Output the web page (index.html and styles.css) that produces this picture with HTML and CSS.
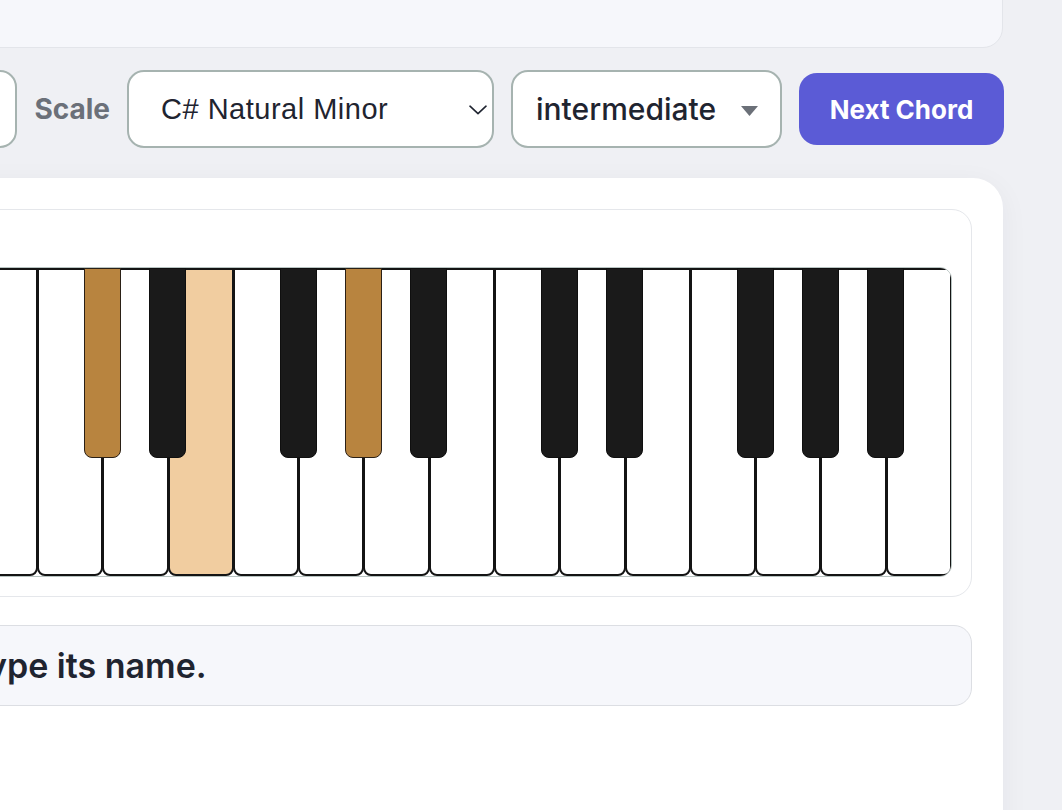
FILE: index.html
```html
<!DOCTYPE html>
<html lang="en">
<head>
<meta charset="utf-8">
<title>Chord Trainer</title>
<link rel="stylesheet" href="styles.css">
</head>
<body>
<div class="page">
  <div class="top-card"></div>

  <div class="controls">
    <span class="label">Key</span>
    <div class="select select-key">
      <span class="select-text">C#</span>
    </div>
    <span class="label">Scale</span>
    <div class="select select-scale">
      <span class="select-text">C# Natural Minor</span>
      <svg class="chevron" width="18" height="10" viewBox="0 0 18 10"><path d="M1 1.2 L9 8.6 L17 1.2" fill="none" stroke="#1f2430" stroke-width="1.6" stroke-linecap="round" stroke-linejoin="round"/></svg>
    </div>
    <div class="select select-level">
      <span class="level-text">intermediate</span>
      <svg class="caret" width="17" height="10" viewBox="0 0 17 10"><path d="M0 0 H17 L8.5 10 Z" fill="#6b7078"/></svg>
    </div>
    <button class="next-btn">Next Chord</button>
  </div>

  <div class="main-card">
    <div class="piano-card">
      <div class="keyboard">
        <div class="wkey"></div><div class="wkey"></div><div class="wkey"></div><div class="wkey"></div><div class="wkey"></div><div class="wkey"></div><div class="wkey"></div>
        <div class="wkey"></div><div class="wkey"></div><div class="wkey lit"></div><div class="wkey"></div><div class="wkey"></div><div class="wkey"></div><div class="wkey"></div>
        <div class="wkey"></div><div class="wkey"></div><div class="wkey"></div><div class="wkey"></div><div class="wkey"></div><div class="wkey"></div><div class="wkey"></div>

        <div class="bkey" style="left: calc(1 / 21 * 100% - 18.5px)"></div>
        <div class="bkey" style="left: calc(2 / 21 * 100% - 18.5px)"></div>
        <div class="bkey" style="left: calc(4 / 21 * 100% - 18.5px)"></div>
        <div class="bkey" style="left: calc(5 / 21 * 100% - 18.5px)"></div>
        <div class="bkey" style="left: calc(6 / 21 * 100% - 18.5px)"></div>
        <div class="bkey lit" style="left: calc(8 / 21 * 100% - 18.5px)"></div>
        <div class="bkey" style="left: calc(9 / 21 * 100% - 18.5px)"></div>
        <div class="bkey" style="left: calc(11 / 21 * 100% - 18.5px)"></div>
        <div class="bkey lit" style="left: calc(12 / 21 * 100% - 18.5px)"></div>
        <div class="bkey" style="left: calc(13 / 21 * 100% - 18.5px)"></div>
        <div class="bkey" style="left: calc(15 / 21 * 100% - 18.5px)"></div>
        <div class="bkey" style="left: calc(16 / 21 * 100% - 18.5px)"></div>
        <div class="bkey" style="left: calc(18 / 21 * 100% - 18.5px)"></div>
        <div class="bkey" style="left: calc(19 / 21 * 100% - 18.5px)"></div>
        <div class="bkey" style="left: calc(20 / 21 * 100% - 18.5px)"></div>
      </div>
    </div>

    <div class="prompt">Identify this chord and type its name.</div>

    <div class="answer-space"></div>
  </div>
</div>
</body>
</html>
```

FILE: styles.css
```css
* {
  box-sizing: border-box;
}

html, body {
  margin: 0;
  padding: 0;
  background: #eff0f4;
  overflow: hidden;
}

body {
  font-family: "Inter", "Liberation Sans", sans-serif;
  color: #1f2430;
}

.page {
  width: 1475px;
  margin-left: -472px;
}

.top-card {
  height: 68px;
  margin-top: -20px;
  background: #f6f7fb;
  border: 1px solid #e3e5ea;
  border-radius: 20px;
}

.controls {
  display: flex;
  justify-content: flex-end;
  align-items: center;
  gap: 17px;
  margin-top: 22px;
  margin-right: -1px;
}

.label {
  font-family: "Inter", sans-serif;
  font-weight: 700;
  font-size: 28px;
  color: #6b7079;
}

.select {
  display: flex;
  align-items: center;
  height: 78px;
  background: #ffffff;
  border: 2px solid #a6b3b0;
  border-radius: 17px;
}

.select-key {
  width: 150px;
  padding-left: 24px;
}

.select-text {
  font-family: "Liberation Sans", Arial, sans-serif;
  font-size: 29px;
  letter-spacing: 0.5px;
  color: #1f2430;
}

.select-scale {
  width: 367px;
  padding-left: 32px;
  padding-right: 5px;
  justify-content: space-between;
}

.chevron {
  margin-top: 1px;
}

.select-level {
  width: 271px;
  padding-left: 23px;
  padding-right: 22px;
  justify-content: space-between;
}

.level-text {
  font-family: "Inter", sans-serif;
  font-weight: 500;
  font-size: 30px;
  color: #1f2430;
}

.caret {
  margin-top: 3px;
}

.next-btn {
  width: 205px;
  height: 72px;
  border: none;
  border-radius: 18px;
  background: #5b5bd6;
  color: #ffffff;
  font-family: "Inter", sans-serif;
  font-weight: 700;
  font-size: 26px;
  padding: 0;
}

.main-card {
  margin-top: 30px;
  background: #ffffff;
  border-radius: 30px;
  padding: 31px 31px 200px;
  box-shadow: 0 6px 28px rgba(20, 28, 50, 0.05);
}

.piano-card {
  border: 1px solid #e5e7eb;
  border-radius: 20px;
  padding: 57px 19px 19px;
}

.keyboard {
  position: relative;
  display: flex;
  height: 310px;
  border: 1px solid #b8c4c2;
  border-radius: 12px;
  overflow: hidden;
  background: #ffffff;
}

.wkey {
  flex: 1 1 0;
  height: 100%;
  margin-right: -1px;
  background: #ffffff;
  border: 2px solid #141414;
  border-radius: 0 0 8px 8px;
}

.wkey.lit {
  background: #f1cda0;
}

.bkey {
  position: absolute;
  top: 0;
  width: 37px;
  height: 190px;
  background: #1a1a1a;
  border: 1px solid #0f0f0f;
  border-radius: 0 0 8px 8px;
}

.bkey.lit {
  background: #b8843f;
  border-color: #2a2016;
}

.prompt {
  display: flex;
  align-items: center;
  height: 81px;
  margin-top: 28px;
  padding-left: 37px;
  background: #f6f7fb;
  border: 1px solid #dcdee3;
  border-radius: 18px;
  font-family: "Inter", sans-serif;
  font-weight: 600;
  font-size: 34px;
  color: #1f2430;
  white-space: nowrap;
}

.answer-space {
  height: 120px;
}
```
